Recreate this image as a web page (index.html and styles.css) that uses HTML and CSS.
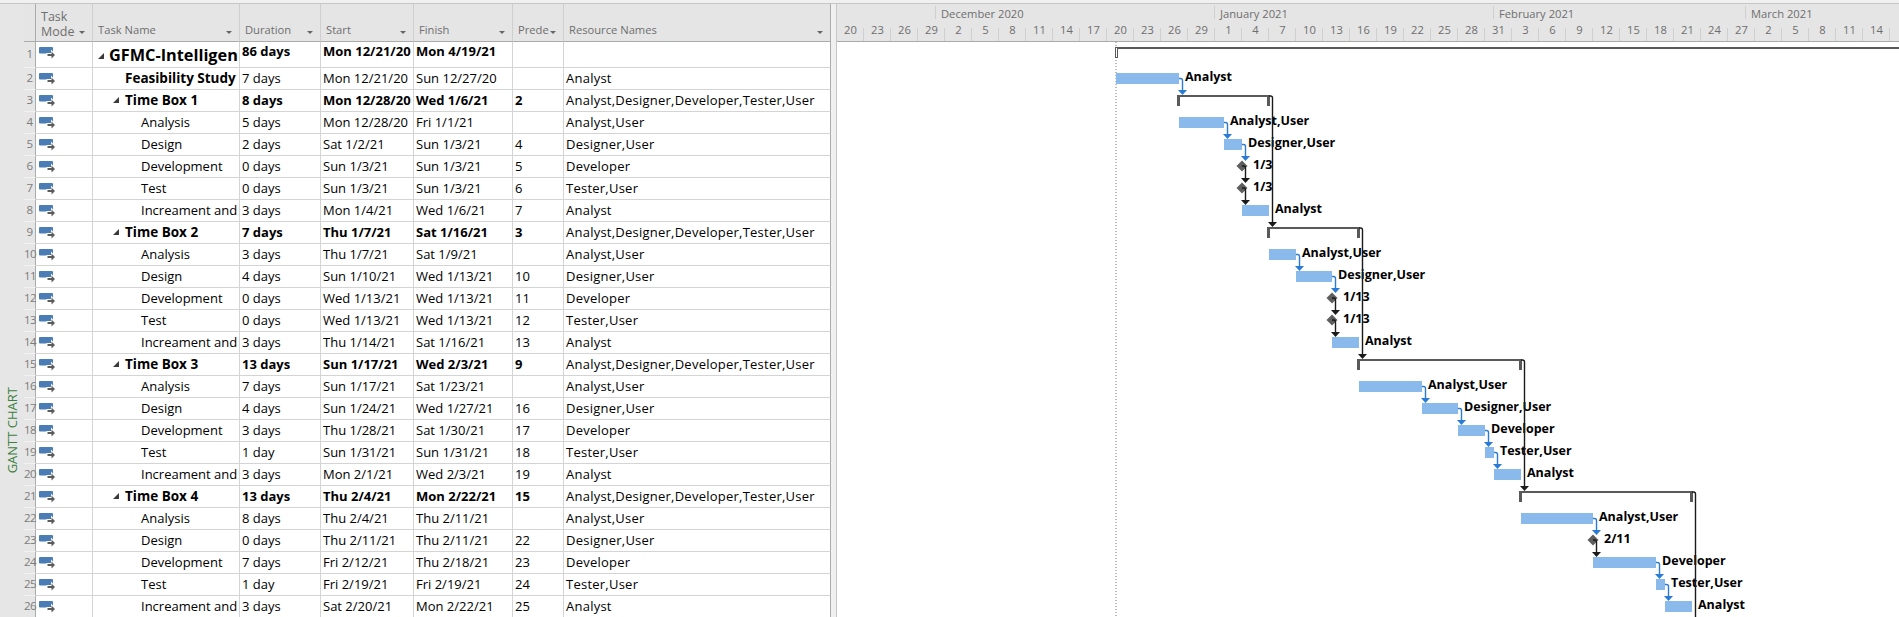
FILE: index.html
```html
<!DOCTYPE html>
<html lang="en">
<head>
  <meta charset="UTF-8" />
  <title>GFMC Gantt Chart</title>
  <link rel="stylesheet" href="styles.css">
</head>
<body>
  <div class="topgap"></div>
  <div class="app">
    <div class="side"><span class="side-label">GANTT CHART</span></div>
    <table class="sheet">
      <colgroup>
        <col class="c-num"><col class="c-mode"><col class="c-name"><col class="c-dur">
        <col class="c-start"><col class="c-finish"><col class="c-pred"><col class="c-res">
      </colgroup>
      <thead>
        <tr>
          <th class="num"></th>
          <th><span class="two-line">Task<br>Mode</span><i class="drop"></i></th>
          <th>Task Name<i class="drop"></i></th>
          <th>Duration<i class="drop"></i></th>
          <th>Start<i class="drop"></i></th>
          <th>Finish<i class="drop"></i></th>
          <th>Prede<i class="drop"></i></th>
          <th>Resource Names<i class="drop"></i></th>
        </tr>
      </thead>
      <tbody id="rows"></tbody>
    </table>
    <div class="split"></div>
    <div class="gantt">
      <div class="scale-top" id="months"></div>
      <div class="scale-bottom" id="ticks"></div>
      <svg class="chart" id="chart" viewBox="837 42 1062 575" width="1062" height="575"></svg>
    </div>
  </div>

  <script>
    // name, level (1 project, 2 box, 3 task), duration, start, finish, predecessor, resources
    const all = 'Analyst,Designer,Developer,Tester,User';
    const tasks = [
      ['GFMC-Intelligen', 1, '86 days', 'Mon 12/21/20', 'Mon 4/19/21', '', ''],
      ['Feasibility Study', 2, '7 days', 'Mon 12/21/20', 'Sun 12/27/20', '', 'Analyst'],
      ['Time Box 1', 2, '8 days', 'Mon 12/28/20', 'Wed 1/6/21', '2', all],
      ['Analysis', 3, '5 days', 'Mon 12/28/20', 'Fri 1/1/21', '', 'Analyst,User'],
      ['Design', 3, '2 days', 'Sat 1/2/21', 'Sun 1/3/21', '4', 'Designer,User'],
      ['Development', 3, '0 days', 'Sun 1/3/21', 'Sun 1/3/21', '5', 'Developer'],
      ['Test', 3, '0 days', 'Sun 1/3/21', 'Sun 1/3/21', '6', 'Tester,User'],
      ['Increament and', 3, '3 days', 'Mon 1/4/21', 'Wed 1/6/21', '7', 'Analyst'],
      ['Time Box 2', 2, '7 days', 'Thu 1/7/21', 'Sat 1/16/21', '3', all],
      ['Analysis', 3, '3 days', 'Thu 1/7/21', 'Sat 1/9/21', '', 'Analyst,User'],
      ['Design', 3, '4 days', 'Sun 1/10/21', 'Wed 1/13/21', '10', 'Designer,User'],
      ['Development', 3, '0 days', 'Wed 1/13/21', 'Wed 1/13/21', '11', 'Developer'],
      ['Test', 3, '0 days', 'Wed 1/13/21', 'Wed 1/13/21', '12', 'Tester,User'],
      ['Increament and', 3, '3 days', 'Thu 1/14/21', 'Sat 1/16/21', '13', 'Analyst'],
      ['Time Box 3', 2, '13 days', 'Sun 1/17/21', 'Wed 2/3/21', '9', all],
      ['Analysis', 3, '7 days', 'Sun 1/17/21', 'Sat 1/23/21', '', 'Analyst,User'],
      ['Design', 3, '4 days', 'Sun 1/24/21', 'Wed 1/27/21', '16', 'Designer,User'],
      ['Development', 3, '3 days', 'Thu 1/28/21', 'Sat 1/30/21', '17', 'Developer'],
      ['Test', 3, '1 day', 'Sun 1/31/21', 'Sun 1/31/21', '18', 'Tester,User'],
      ['Increament and', 3, '3 days', 'Mon 2/1/21', 'Wed 2/3/21', '19', 'Analyst'],
      ['Time Box 4', 2, '13 days', 'Thu 2/4/21', 'Mon 2/22/21', '15', all],
      ['Analysis', 3, '8 days', 'Thu 2/4/21', 'Thu 2/11/21', '', 'Analyst,User'],
      ['Design', 3, '0 days', 'Thu 2/11/21', 'Thu 2/11/21', '22', 'Designer,User'],
      ['Development', 3, '7 days', 'Fri 2/12/21', 'Thu 2/18/21', '23', 'Developer'],
      ['Test', 3, '1 day', 'Fri 2/19/21', 'Fri 2/19/21', '24', 'Tester,User'],
      ['Increament and', 3, '3 days', 'Sat 2/20/21', 'Mon 2/22/21', '25', 'Analyst']
    ].map((t, i) => ({
      id: i + 1, name: t[0], level: t[1], dur: t[2], start: t[3], finish: t[4], pred: t[5], res: t[6],
      summary: t[1] === 1 || t[0].startsWith('Time Box'),
      milestone: t[2] === '0 days'
    }));

    const modeIcon = `<svg class="mode" width="17" height="12" viewBox="0 0 17 12">
      <rect class="mode-bar" x="0" y="0" width="14" height="6.5" rx="1"/>
      <path class="mode-cut" d="M7.5 6h4.5V2.5l5 5.5-5 5v-3H7.5z"/>
      <path class="mode-arrow" d="M8.5 7h4V4.5L16 8l-3.5 3.5V9h-4z"/>
    </svg>`;

    let html = '';
    tasks.forEach(t => {
      const toggle = t.summary ? '<i class="toggle"></i>' : '';
      const cls = `lvl${t.level}${t.summary ? ' has-toggle' : ''}${t.level < 3 ? ' strong' : ''}`;
      html += `<tr class="${t.level === 1 ? 'project' : ''}">
        <td class="num">${t.id}</td>
        <td class="mode-cell">${modeIcon}</td>
        <td class="name ${cls}">${toggle}${t.name}</td>
        <td class="${t.summary ? 'strong' : ''}">${t.dur}</td>
        <td class="${t.summary ? 'strong' : ''}">${t.start}</td>
        <td class="${t.summary ? 'strong' : ''}">${t.finish}</td>
        <td class="${t.summary ? 'strong' : ''}">${t.pred}</td>
        <td class="res">${t.res}</td>
      </tr>`;
    });
    document.getElementById('rows').innerHTML = html;

    // timescale, 9px per day
    const DAY = 86400000, PX = 9, ORIGIN_X = 1116;
    const ORIGIN = Date.UTC(2020, 11, 21);
    const dayOf = s => {
      const p = s.split(' ')[1].split('/').map(Number);
      return (Date.UTC(2000 + p[2], p[0] - 1, p[1]) - ORIGIN) / DAY;
    };

    let tickHtml = '';
    for (let i = 0; i < 39; i++) {
      const d = new Date(Date.UTC(2020, 10, 20) + i * 3 * DAY);
      tickHtml += `<span class="tick">${d.getUTCDate()}</span>`;
    }
    document.getElementById('ticks').innerHTML = tickHtml;

    const months = [['', 11], ['December 2020', 31], ['January 2021', 31], ['February 2021', 28], ['March 2021', 31]];
    document.getElementById('months').innerHTML = months.map(m =>
      `<span class="month" style="width:${m[1] * PX}px">${m[0]}</span>`).join('');

    // chart, drawn in page coordinates
    const rowTop = id => 67 + 22 * (id - 2);
    const startX = t => ORIGIN_X + dayOf(t.start) * PX;
    const endX = t => ORIGIN_X + (dayOf(t.finish) + 1) * PX;

    let svg = '<line class="today" x1="1116" y1="42" x2="1116" y2="617"/>';

    tasks.forEach(t => {
      const y = rowTop(t.id);
      const x1 = startX(t), x2 = endX(t);
      if (t.level === 1) {
        svg += `<rect class="sum" x="1115" y="47" width="800" height="2"/>
                <rect class="sum-open" x="1115.5" y="47.5" width="2" height="10"/>`;
        return;
      }
      if (t.summary) {
        svg += `<rect class="sum" x="${x1 - 2}" y="${y + 6}" width="${x2 - x1 + 3}" height="2"/>
                <rect class="sum" x="${x1 - 2}" y="${y + 6}" width="3" height="11"/>
                <rect class="sum" x="${x2 - 2}" y="${y + 6}" width="3" height="11"/>`;
        return;
      }
      if (t.milestone) {
        svg += `<path class="diamond" d="M${x2} ${y + 5.5}l5.5 5.5-5.5 5.5-5.5-5.5z"/>`;
      } else {
        svg += `<rect class="bar" x="${x1}" y="${y + 6}" width="${x2 - x1}" height="11"/>`;
      }
      const p = t.start.split(' ')[1].split('/');
      const label = t.milestone ? `${p[0]}/${p[1]}` : t.res;
      svg += `<text class="label" x="${x2 + (t.milestone ? 11 : 6)}" y="${y + 14}">${label}</text>`;
    });

    const link = (x, y, tip, cls) => {
      const lx = x + 3.5;
      return `<path class="link ${cls}" d="M${x} ${y}h1.5q2 0 2 2V${tip - 4}"/>
              <path class="head ${cls}" d="M${lx - 4.5} ${tip - 5}h9l-4.5 5z"/>`;
    };

    tasks.forEach(t => {
      if (!t.pred) return;
      const from = tasks[Number(t.pred) - 1];
      const black = from.summary || from.milestone;
      const y = rowTop(from.id) + (from.summary ? 7 : from.milestone ? 11 : 11.5);
      svg += link(endX(from), y, rowTop(t.id) + 6, black ? 'black' : 'blue');
    });
    // Time Box 4 carries on to a box below the visible rows
    svg += link(1692, rowTop(21) + 7, 700, 'black');

    document.getElementById('chart').innerHTML = svg;
  </script>
</body>
</html>
```

FILE: styles.css
```css
html, body {
  margin: 0;
  height: 100%;
  overflow: hidden;
}
body {
  font-family: "Open Sans", "Noto Sans", sans-serif;
  font-size: 13px;
  color: #000;
  background: #f0f0f0;
}
.topgap {
  height: 3px;
}
.app {
  display: flex;
  height: 614px;
  overflow: hidden;
  border-top: 1px solid #c6c6c6;
  box-sizing: border-box;
}

/* left strip */
.side {
  flex: none;
  width: 24px;
  background: #e6e6e6;
  padding-top: 383px;
  box-sizing: border-box;
}
.side-label {
  display: block;
  writing-mode: vertical-rl;
  transform: rotate(180deg);
  color: #3c7f41;
  font-size: 13px;
  line-height: 24px;
  width: 24px;
  text-align: left;
}

/* table */
.sheet {
  flex: none;
  width: 807px;
  table-layout: fixed;
  border-collapse: separate;
  border-spacing: 0;
  background: #fff;
  align-self: flex-start;
}
.c-num { width: 12px; }
.c-mode { width: 57px; }
.c-name { width: 147px; }
.c-dur { width: 81px; }
.c-start { width: 93px; }
.c-finish { width: 99px; }
.c-pred { width: 51px; }
.c-res { width: 267px; }

th {
  position: relative;
  height: 38px;
  box-sizing: border-box;
  background: #e5e5e5;
  border-right: 1px solid #cfcfcf;
  border-bottom: 1px solid #ababab;
  padding: 18px 0 0 5px;
  font-size: 11.2px;
  font-weight: normal;
  text-align: left;
  vertical-align: top;
  color: #6e6e6e;
  white-space: nowrap;
  line-height: 16px;
}
th.num {
  border-right-color: #ababab;
  padding: 0;
}
th:last-child {
  border-right-color: #ababab;
}
.two-line {
  display: block;
  margin-top: -13px;
  font-size: 12.5px;
  line-height: 15px;
}
.drop {
  position: absolute;
  right: 7px;
  top: 27px;
  border-style: solid;
  border-width: 3px 3px 0;
  border-color: #666 transparent transparent;
}
td {
  height: 22px;
  box-sizing: border-box;
  padding: 0 0 2px 2px;
  border-right: 1px solid #d4d4d4;
  border-bottom: 1px solid #d4d4d4;
  white-space: nowrap;
  overflow: hidden;
  line-height: 18px;
}
td:last-child {
  border-right-color: #ababab;
}
.res {
  letter-spacing: .24px;
}
.project td {
  height: 26px;
  padding-bottom: 7px;
}
td.num {
  background: #e6e6e6;
  border-right: 1px solid #ababab;
  border-bottom-color: #f2f2f2;
  color: #7b7b7b;
  font-size: 11.5px;
  letter-spacing: -.6px;
  text-align: center;
  padding: 0 0 2px 0;
  overflow: visible;
}
.mode-cell {
  padding: 0 0 0 3px;
  line-height: 0;
  vertical-align: top;
}
.project .mode-cell {
  padding-bottom: 0;
}
.mode {
  margin-top: 5px;
}
.mode-bar { fill: #4a7db6; }
.mode-cut { fill: #fff; }
.mode-arrow { fill: #5c5c5c; }

.strong { font-weight: 700; }
.project td.name {
  font-size: 16.3px;
  line-height: 22px;
  padding: 0 0 0 5px;
}
.project .toggle {
  margin-right: 5px;
}
.name.lvl2 {
  font-size: 13.5px;
  padding-left: 32px;
}
.name.lvl2.has-toggle { padding-left: 20px; }
.name.lvl3 { padding-left: 48px; }
.toggle {
  display: inline-block;
  width: 0;
  height: 0;
  margin-right: 6px;
  vertical-align: 2px;
  border-style: solid;
  border-width: 0 0 6px 6px;
  border-color: transparent transparent #3a3a3a;
}

.split {
  flex: none;
  width: 5px;
  background: #f0f0f0;
  border-right: 1px solid #c6c6c6;
}

/* chart */
.gantt {
  flex: 1;
  min-width: 0;
  overflow: hidden;
  background: #fff;
}
.scale-top, .scale-bottom {
  display: flex;
  background: #e5e5e5;
  color: #6e6e6e;
  font-size: 11.2px;
  white-space: nowrap;
}
.scale-top {
  height: 15px;
  line-height: 15px;
  padding-top: 2px;
  box-sizing: border-box;
}
.month {
  flex: none;
  box-sizing: border-box;
  padding-left: 5px;
  border-right: 1px solid #cfcfcf;
}
.scale-bottom {
  height: 23px;
  border-bottom: 1px solid #ababab;
  line-height: 21px;
  box-sizing: border-box;
}
.tick {
  flex: none;
  position: relative;
  width: 27px;
  text-align: center;
}
.tick::after {
  content: "";
  position: absolute;
  right: 0;
  bottom: 0;
  height: 13px;
  border-right: 1px solid #cfcfcf;
}
.chart {
  display: block;
}
.today {
  stroke: #777;
  stroke-width: 1;
  stroke-dasharray: 1 2;
}
.bar { fill: #8ab9ec; }
.sum { fill: #595959; }
.sum-open {
  fill: #fff;
  stroke: #595959;
  stroke-width: 1;
}
.diamond { fill: #5e5e5e; }
.label {
  font-size: 12.5px;
  font-weight: 700;
  fill: #000;
}
.link {
  fill: none;
  stroke-width: 1.4;
}
.link.blue { stroke: #2a7bd6; }
.link.black { stroke: #1a1a1a; }
.head.blue { fill: #2a7bd6; }
.head.black { fill: #1a1a1a; }
```
